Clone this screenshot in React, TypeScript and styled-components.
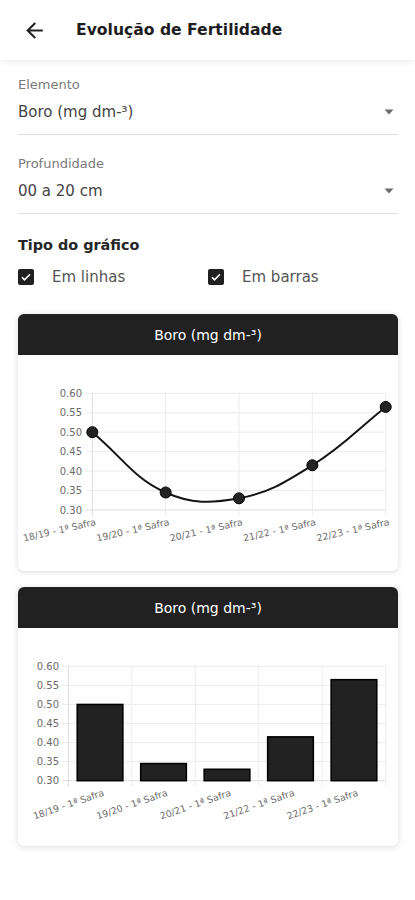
import React from 'react';
import styled, { createGlobalStyle } from 'styled-components';

const GlobalStyle = createGlobalStyle`
    body {
        margin: 0;
        background: #ffffff;
        font-family: "DejaVu Sans", "Liberation Sans", sans-serif;
        color: #222;
    }
`;

const Page = styled.div`
    width: 415px;
    min-height: 900px;
    background: #fff;
`;

const TopBar = styled.header`
    height: 60px;
    display: flex;
    align-items: center;
    padding: 0 0 0 22px;
    gap: 29px;
    background: #fff;
    box-shadow: 0 2px 6px rgba(0, 0, 0, 0.08);
`;

const BackButton = styled.button`
    border: none;
    background: none;
    padding: 0;
    width: 25px;
    height: 25px;
    display: flex;
    align-items: center;
    justify-content: center;
    cursor: pointer;
`;

const Title = styled.h1`
    margin: 0;
    font-size: 15.6px;
    font-weight: 700;
    color: #1e1e1e;
`;

const Content = styled.main`
    padding: 16px 17px 40px 18px;
`;

const Field = styled.div<{ $first?: boolean }>`
    margin-top: ${p => (p.$first ? '0' : '20px')};
    border-bottom: 1px solid #dedede;
    padding-bottom: 12px;
`;

const FieldLabel = styled.div`
    font-size: 13px;
    line-height: 18px;
    color: #7a7a7a;
`;

const FieldValue = styled.div`
    margin-top: 8px;
    height: 20px;
    display: flex;
    align-items: center;
    justify-content: space-between;
    font-size: 15px;
    color: #444;
    padding-right: 4px;
`;

const SectionTitle = styled.h2`
    margin: 21px 0 0;
    font-size: 14.4px;
    line-height: 20px;
    font-weight: 700;
    color: #262626;
`;

const CheckGrid = styled.div`
    margin-top: 12px;
    display: grid;
    grid-template-columns: 1fr 1fr;
`;

const CheckItem = styled.label`
    display: flex;
    align-items: center;
    gap: 18px;
    height: 20px;
    font-size: 15px;
    color: #555;
`;

const CheckBox = styled.span`
    width: 16px;
    height: 16px;
    border-radius: 2px;
    background: #202020;
    display: flex;
    align-items: center;
    justify-content: center;
`;

const Card = styled.section<{ $gap: number }>`
    margin-top: ${p => p.$gap}px;
    border-radius: 6px;
    background: #fff;
    box-shadow: 0 1px 6px rgba(0, 0, 0, 0.14);
    overflow: hidden;
`;

const CardHeader = styled.div`
    height: 41px;
    background: #212121;
    color: #fff;
    font-size: 14px;
    display: flex;
    align-items: center;
    justify-content: center;
`;

const ChartBody = styled.div<{ $h: number }>`
    height: ${p => p.$h}px;
    svg {
        display: block;
    }
`;

const labels = ['18/19 - 1ª Safra', '19/20 - 1ª Safra', '20/21 - 1ª Safra', '21/22 - 1ª Safra', '22/23 - 1ª Safra'];
const values = [0.5, 0.345, 0.33, 0.415, 0.565];
const ticks = [0.6, 0.55, 0.5, 0.45, 0.4, 0.35, 0.3];

type Pt = { x: number; y: number };

const splinePath = (pts: Pt[], t = 0.4) => {
    const cps = pts.map((p, i) => {
        const prev = pts[i - 1] || p;
        const next = pts[i + 1] || p;
        const d01 = Math.hypot(p.x - prev.x, p.y - prev.y);
        const d12 = Math.hypot(next.x - p.x, next.y - p.y);
        const s01 = d01 + d12 ? d01 / (d01 + d12) : 0;
        const s12 = d01 + d12 ? d12 / (d01 + d12) : 0;
        const fa = t * s01;
        const fb = t * s12;
        return {
            prev: { x: p.x - fa * (next.x - prev.x), y: p.y - fa * (next.y - prev.y) },
            next: { x: p.x + fb * (next.x - prev.x), y: p.y + fb * (next.y - prev.y) },
        };
    });
    let d = `M${pts[0].x},${pts[0].y}`;
    for (let i = 1; i < pts.length; i++) {
        const a = cps[i - 1].next;
        const b = cps[i].prev;
        d += ` C${a.x},${a.y} ${b.x},${b.y} ${pts[i].x},${pts[i].y}`;
    }
    return d;
};

type Frame = { left: number; right: number; top: number; bottom: number };

type AxesProps = { f: Frame; xs: number[]; tickXs: number[]; labelRight: number; angle: number };

const Axes: React.FC<AxesProps> = ({ f, xs, tickXs, labelRight, angle }) => {
    const yOf = (v: number) => f.bottom - ((v - 0.3) / 0.3) * (f.bottom - f.top);
    return (
        <g>
            {ticks.map(v => (
                <g key={v}>
                    <line x1={f.left - 6} x2={f.right} y1={yOf(v)} y2={yOf(v)} stroke={v === 0.3 ? '#dcdcdc' : '#ececec'} strokeWidth={1} />
                    <text x={labelRight} y={yOf(v) + 3.6} textAnchor="end" fontSize="10" fill="#6b6b6b">
                        {v.toFixed(2)}
                    </text>
                </g>
            ))}
            {xs.map((x, i) => (
                <line key={i} x1={x} x2={x} y1={f.top} y2={f.bottom + 6} stroke={i === 0 ? '#dcdcdc' : '#ececec'} strokeWidth={1} />
            ))}
            {tickXs.map((x, i) => (
                <text
                    key={i}
                    x={x + 3}
                    y={f.bottom + 15}
                    textAnchor="end"
                    fontSize="9.4"
                    fill="#6b6b6b"
                    transform={`rotate(${angle} ${x + 3} ${f.bottom + 10})`}
                >
                    {labels[i]}
                </text>
            ))}
        </g>
    );
};

const LineChart: React.FC = () => {
    const f = { left: 74.3, right: 367.7, top: 38.3, bottom: 155 };
    const step = (f.right - f.left) / 4;
    const xs = labels.map((_, i) => f.left + i * step);
    const pts = values.map((v, i) => ({ x: xs[i], y: f.bottom - ((v - 0.3) / 0.3) * (f.bottom - f.top) }));
    return (
        <svg width="380" height="216" viewBox="0 0 380 216">
            <Axes f={f} xs={xs} tickXs={xs} labelRight={64} angle={-13} />
            <path d={splinePath(pts)} fill="none" stroke="#151515" strokeWidth={2} />
            {pts.map((p, i) => (
                <circle key={i} cx={p.x} cy={p.y} r={5.5} fill="#232323" stroke="#000" strokeWidth={1} />
            ))}
        </svg>
    );
};

const BarChart: React.FC = () => {
    const f = { left: 50.3, right: 367.7, top: 38.3, bottom: 152.7 };
    const step = (f.right - f.left) / 5;
    const bounds = [0, 1, 2, 3, 4, 5].map(i => f.left + i * step);
    const centers = labels.map((_, i) => f.left + (i + 0.5) * step);
    const barW = step * 0.72;
    return (
        <svg width="380" height="218" viewBox="0 0 380 218">
            <Axes f={f} xs={bounds} tickXs={centers} labelRight={41} angle={-19} />
            {values.map((v, i) => {
                const y = f.bottom - ((v - 0.3) / 0.3) * (f.bottom - f.top);
                return (
                    <rect key={i} x={centers[i] - barW / 2} y={y} width={barW} height={f.bottom - y} fill="#222" stroke="#000" strokeWidth={1.5} />
                );
            })}
        </svg>
    );
};

const ArrowBack = () => (
    <svg width="25" height="25" viewBox="0 0 24 24">
        <path d="M20 11H7.83l5.59-5.59L12 4l-8 8 8 8 1.41-1.41L7.83 13H20v-2z" fill="#222" />
    </svg>
);

const Caret = () => (
    <svg width="10" height="6" viewBox="0 0 10 6">
        <path d="M0.5 0.5 L9.5 0.5 L5 5.5 Z" fill="#6d6d6d" />
    </svg>
);

const Check = () => (
    <svg width="12" height="12" viewBox="0 0 24 24">
        <path d="M4 12.5l5 5L20 6.5" fill="none" stroke="#fff" strokeWidth={3.4} />
    </svg>
);

const App: React.FC = () => {
    return (
        <Page>
            <GlobalStyle />
            <TopBar>
                <BackButton aria-label="Voltar">
                    <ArrowBack />
                </BackButton>
                <Title>Evolução de Fertilidade</Title>
            </TopBar>
            <Content>
                <Field $first>
                    <FieldLabel>Elemento</FieldLabel>
                    <FieldValue>
                        <span>Boro (mg dm-³)</span>
                        <Caret />
                    </FieldValue>
                </Field>
                <Field>
                    <FieldLabel>Profundidade</FieldLabel>
                    <FieldValue>
                        <span>00 a 20 cm</span>
                        <Caret />
                    </FieldValue>
                </Field>
                <SectionTitle>Tipo do gráfico</SectionTitle>
                <CheckGrid>
                    <CheckItem>
                        <CheckBox>
                            <Check />
                        </CheckBox>
                        Em linhas
                    </CheckItem>
                    <CheckItem>
                        <CheckBox>
                            <Check />
                        </CheckBox>
                        Em barras
                    </CheckItem>
                </CheckGrid>
                <Card $gap={27}>
                    <CardHeader>Boro (mg dm-³)</CardHeader>
                    <ChartBody $h={216}>
                        <LineChart />
                    </ChartBody>
                </Card>
                <Card $gap={16}>
                    <CardHeader>Boro (mg dm-³)</CardHeader>
                    <ChartBody $h={218}>
                        <BarChart />
                    </ChartBody>
                </Card>
            </Content>
        </Page>
    );
};

export default App;
